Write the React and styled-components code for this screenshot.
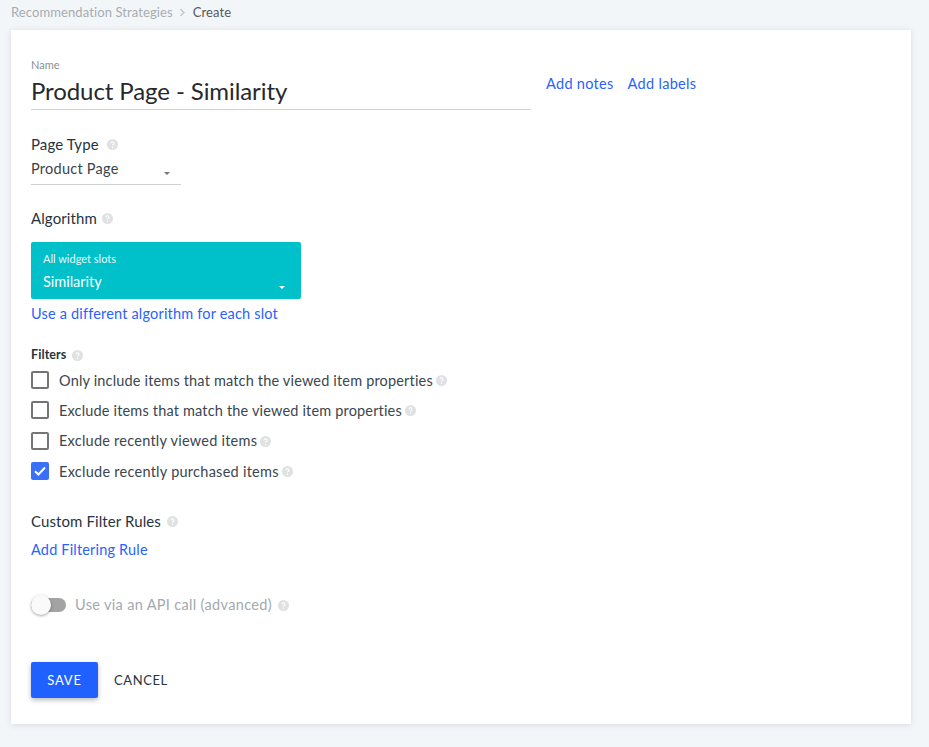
import React from 'react';
import styled, { createGlobalStyle } from 'styled-components';

const GlobalStyle = createGlobalStyle`
  html, body {
    margin: 0;
    background: #f3f6f9;
    font-family: 'Lato', 'Open Sans', sans-serif;
    color: #26343d;
  }
`;

const Page = styled.div`
  width: 929px;
  height: 747px;
  padding: 0 18px 23px 11px;
  box-sizing: border-box;
  overflow: hidden;
`;

const Crumbs = styled.div`
  height: 30px;
  display: flex;
  align-items: center;
  padding-bottom: 6px;
  box-sizing: border-box;
  gap: 6px;
  font-size: 13px;
  letter-spacing: 0.1px;
  color: #a7acb0;
`;

const CrumbCurrent = styled.span`
  color: #55595c;
  margin-left: 1px;
`;

const Card = styled.div`
  height: 694px;
  background: #fff;
  padding: 28px 20px 0;
  box-sizing: border-box;
  box-shadow: 0 1px 6px rgba(40, 60, 80, 0.14);
  display: flex;
  flex-direction: column;
`;

const NameRow = styled.div`
  display: flex;
  align-items: flex-end;
  gap: 15px;
`;

const NameField = styled.div`
  width: 500px;
  border-bottom: 1px solid #cfd2d4;
  padding-bottom: 2px;
`;

const SmallLabel = styled.div`
  font-size: 11px;
  line-height: 14px;
  color: #8a8f93;
`;

const NameValue = styled.div`
  font-size: 24px;
  line-height: 32px;
  margin-top: 3px;
  letter-spacing: -0.09px;
  color: #26292c;
`;

const Links = styled.div`
  display: flex;
  gap: 14px;
  padding-bottom: 17px;
`;

const LinkText = styled.a`
  font-size: 14.5px;
  line-height: 18px;
  color: #2962ff;
  letter-spacing: 0.3px;
`;

const SectionLabel = styled.div`
  display: flex;
  align-items: center;
  gap: ${p => p.$gap || 6}px;
  font-size: ${p => p.$small ? 12.5 : 15}px;
  font-weight: ${p => p.$small ? 700 : 400};
  line-height: 18px;
  margin-top: ${p => p.$top}px;
  letter-spacing: 0.1px;
  color: #26343d;
`;

const Help = styled.svg`
  width: 11px;
  height: 11px;
  flex: none;
  margin-top: 1px;
`;

const PageSelect = styled.div`
  width: 150px;
  height: 29px;
  margin-top: 3px;
  border-bottom: 1px solid #cfd2d4;
  display: flex;
  align-items: center;
  justify-content: space-between;
  padding: 0 11px 4px 0;
  box-sizing: border-box;
  font-size: 14.5px;
  letter-spacing: 0.25px;
  color: #3a4348;
`;

const Caret = styled.span`
  width: 0;
  height: 0;
  margin-top: 10px;
  border-left: 3.5px solid transparent;
  border-right: 3.5px solid transparent;
  border-top: 3px solid ${p => p.$color || '#777'};
`;

const SlotBox = styled.div`
  width: 270px;
  height: 57px;
  margin-top: 15px;
  background: #00c1c9;
  border-radius: 2px;
  padding: 10px 12px 0;
  box-sizing: border-box;
  color: #fff;
  position: relative;
`;

const SlotLabel = styled.div`
  font-size: 11px;
  line-height: 14px;
  color: #e4f8f9;
`;

const SlotValue = styled.div`
  display: flex;
  justify-content: space-between;
  align-items: center;
  margin-top: 7px;
  padding-right: 4px;
  font-size: 14.5px;
  line-height: 18px;
  letter-spacing: 0;
`;

const BlockLink = styled(LinkText)`
  display: block;
  margin-top: ${p => p.$top}px;
  letter-spacing: 0.18px;
`;

const CheckList = styled.div`
  display: flex;
  flex-direction: column;
  margin-top: 1px;
`;

const CheckRow = styled.div`
  height: 30.33px;
  display: flex;
  align-items: center;
  gap: 3px;
  font-size: 14.5px;
  letter-spacing: ${p => p.$spacing}px;
  color: #3a4650;
`;

const Box = styled.span`
  width: 18px;
  height: 18px;
  box-sizing: border-box;
  flex: none;
  margin-right: 7px;
  border-radius: 2px;
  border: ${p => p.$on ? 'none' : '2px solid #757575'};
  background: ${p => p.$on ? '#3a6ff7' : '#fff'};
  display: flex;
  align-items: center;
  justify-content: center;
`;

const ToggleRow = styled.div`
  display: flex;
  align-items: center;
  gap: 6px;
  margin-top: 37px;
  font-size: 14.5px;
  letter-spacing: 0.33px;
  color: #a2aaae;
`;

const Track = styled.span`
  width: 35px;
  height: 14px;
  border-radius: 7px;
  background: #a3a3a3;
  position: relative;
  margin-right: 3px;
`;

const Knob = styled.span`
  position: absolute;
  left: 0;
  top: -3px;
  width: 20px;
  height: 20px;
  border-radius: 50%;
  background: #fafafa;
  box-shadow: 0 1px 3px rgba(0, 0, 0, 0.35);
`;

const Actions = styled.div`
  display: flex;
  align-items: center;
  gap: 16px;
  margin-top: 49px;
`;

const SaveButton = styled.button`
  width: 67px;
  height: 36px;
  background: #2060ff;
  border: none;
  border-radius: 2px;
  color: #fff;
  font: inherit;
  font-size: 13px;
  letter-spacing: 0.8px;
  box-shadow: 0 2px 5px rgba(0, 0, 0, 0.28);
`;

const CancelButton = styled.span`
  font-size: 13px;
  letter-spacing: 0.6px;
  color: #26343d;
`;

const HelpIcon = () => (
  <Help viewBox="0 0 12 12">
    <circle cx="6" cy="6" r="6" fill="#dfe1e3" />
    <path d="M4.4 4.7a1.6 1.6 0 1 1 2.4 1.4c-.5.3-.8.6-.8 1.1" fill="none" stroke="#fff" strokeWidth="1.2" />
    <circle cx="6" cy="9" r=".8" fill="#fff" />
  </Help>
);

const filters = [
  { text: 'Only include items that match the viewed item properties', spacing: 0.17 },
  { text: 'Exclude items that match the viewed item properties', spacing: 0.17 },
  { text: 'Exclude recently viewed items', spacing: 0.24 },
  { text: 'Exclude recently purchased items', spacing: 0.26, on: true },
];

export default function App() {
  return (
    <Page>
      <GlobalStyle />
      <Crumbs>
        <span>Recommendation Strategies</span>
        <svg width="7" height="9" viewBox="0 0 7 9"><path d="M1.5 1l3.5 3.5L1.5 8" fill="none" stroke="#9a9fa3" strokeWidth="1" /></svg>
        <CrumbCurrent>Create</CrumbCurrent>
      </Crumbs>
      <Card>
        <NameRow>
          <NameField>
            <SmallLabel>Name</SmallLabel>
            <NameValue>Product Page - Similarity</NameValue>
          </NameField>
          <Links>
            <LinkText>Add notes</LinkText>
            <LinkText>Add labels</LinkText>
          </Links>
        </NameRow>

        <SectionLabel $top={25} $gap={8}>Page Type <HelpIcon /></SectionLabel>
        <PageSelect>Product Page <Caret /></PageSelect>

        <SectionLabel $top={24} $gap={5}>Algorithm <HelpIcon /></SectionLabel>
        <SlotBox>
          <SlotLabel>All widget slots</SlotLabel>
          <SlotValue>Similarity <Caret $color="#fff" /></SlotValue>
        </SlotBox>
        <BlockLink $top={6}>Use a different algorithm for each slot</BlockLink>

        <SectionLabel $small $top={23}>Filters <HelpIcon /></SectionLabel>
        <CheckList>
          {filters.map(f => (
            <CheckRow key={f.text} $spacing={f.spacing}>
              <Box $on={f.on}>
                {f.on && <svg width="12" height="10" viewBox="0 0 12 10"><path d="M1 5.2l3.4 3.3L11 1.5" fill="none" stroke="#fff" strokeWidth="2" /></svg>}
              </Box>
              {f.text} <HelpIcon />
            </CheckRow>
          ))}
        </CheckList>

        <SectionLabel $top={26}>Custom Filter Rules <HelpIcon /></SectionLabel>
        <BlockLink $top={11}>Add Filtering Rule</BlockLink>

        <ToggleRow>
          <Track><Knob /></Track>
          Use via an API call (advanced) <HelpIcon />
        </ToggleRow>

        <Actions>
          <SaveButton>SAVE</SaveButton>
          <CancelButton>CANCEL</CancelButton>
        </Actions>
      </Card>
    </Page>
  );
}
